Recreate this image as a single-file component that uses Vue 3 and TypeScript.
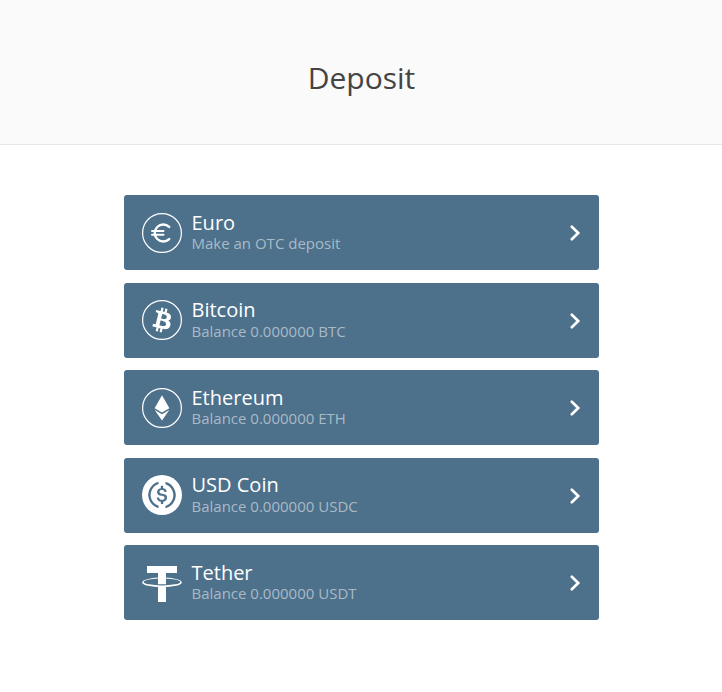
<script setup lang="ts">
interface Currency {
  id: string
  name: string
  detail: string
}

const currencies: Currency[] = [
  { id: 'eur', name: 'Euro', detail: 'Make an OTC deposit' },
  { id: 'btc', name: 'Bitcoin', detail: 'Balance 0.000000 BTC' },
  { id: 'eth', name: 'Ethereum', detail: 'Balance 0.000000 ETH' },
  { id: 'usdc', name: 'USD Coin', detail: 'Balance 0.000000 USDC' },
  { id: 'usdt', name: 'Tether', detail: 'Balance 0.000000 USDT' },
]
</script>

<template>
  <div class="page">
    <header class="header">
      <h1>Deposit</h1>
    </header>
    <main class="list">
      <button v-for="c in currencies" :key="c.id" class="card" type="button">
        <svg class="icon" viewBox="0 0 40 40" aria-hidden="true">
          <circle v-if="['eur', 'btc', 'eth'].includes(c.id)" class="line" cx="20" cy="20" r="19.4" />
          <g v-if="c.id === 'eur'" class="line euro">
            <path d="M27.2 13.9A8.5 8.5 0 1 0 27.2 26.1" />
            <path class="bar" d="M10 18.1H21.5M10 21.7H21.5" />
          </g>
          <path
            v-else-if="c.id === 'btc'"
            transform="scale(1.25)"
            d="M23.189 14.02c.314-2.096-1.283-3.223-3.465-3.975l.708-2.84-1.728-.43-.69 2.765c-.454-.114-.92-.22-1.385-.326l.695-2.783L15.596 6l-.708 2.839c-.376-.086-.746-.17-1.104-.26l.002-.009-2.384-.595-.46 1.846s1.283.294 1.256.312c.7.175.826.638.805 1.006l-.806 3.235c.048.012.11.03.18.057l-.183-.045-1.13 4.532c-.086.212-.303.531-.793.41.018.025-1.256-.313-1.256-.313l-.858 1.978 2.25.561c.418.105.828.215 1.231.318l-.715 2.872 1.727.43.708-2.84c.472.127.93.245 1.378.357l-.706 2.828 1.728.43.715-2.866c2.948.558 5.164.333 6.097-2.333.752-2.146-.037-3.385-1.588-4.192 1.13-.26 1.98-1.003 2.207-2.538zm-3.95 5.538c-.533 2.147-4.148.986-5.32.695l.95-3.805c1.172.293 4.929.872 4.37 3.11zm.535-5.569c-.487 1.953-3.495.96-4.47.717l.86-3.45c.975.243 4.118.696 3.61 2.733z"
          />
          <path v-else-if="c.id === 'eth'" d="M20 7.3L27.4 20.2L20 24.6L12.6 20.2ZM12.7 22L20 26.3L27.3 22L20 32.5Z" />
          <g v-else-if="c.id === 'usdc'">
            <circle cx="20" cy="20" r="20" />
            <g class="cutout" transform="scale(1.25)">
              <path d="M20.022 18.124c0-2.124-1.28-2.852-3.84-3.156-1.828-.243-2.193-.728-2.193-1.578 0-.85.61-1.396 1.828-1.396 1.097 0 1.707.364 2.011 1.275a.458.458 0 00.427.303h.975a.416.416 0 00.427-.425v-.06a3.04 3.04 0 00-2.743-2.489V9.142c0-.243-.183-.425-.487-.486h-.915c-.243 0-.426.182-.487.486v1.396c-1.829.242-2.986 1.456-2.986 2.974 0 2.002 1.218 2.791 3.778 3.095 1.707.303 2.255.668 2.255 1.639 0 .97-.853 1.638-2.011 1.638-1.585 0-2.133-.667-2.316-1.578-.06-.242-.244-.364-.427-.364h-1.036a.416.416 0 00-.426.425v.06c.243 1.518 1.219 2.61 3.23 2.914v1.457c0 .242.183.425.487.485h.915c.243 0 .426-.182.487-.485V21.34c1.829-.303 3.047-1.578 3.047-3.217z" />
              <path d="M12.892 24.497c-4.754-1.7-7.192-6.98-5.424-11.653.914-2.55 2.925-4.491 5.424-5.402.244-.121.365-.303.365-.607v-.85c0-.242-.121-.424-.365-.485-.061 0-.183 0-.244.06a10.895 10.895 0 00-7.13 13.717c1.096 3.4 3.717 6.01 7.13 7.102.244.121.488 0 .548-.243.061-.06.061-.122.061-.243v-.85c0-.182-.182-.424-.365-.546zm6.46-18.936c-.244-.122-.488 0-.548.242-.061.061-.061.122-.061.243v.85c0 .243.182.485.365.607 4.754 1.7 7.192 6.98 5.424 11.653-.914 2.55-2.925 4.491-5.424 5.402-.244.121-.365.303-.365.607v.85c0 .242.121.424.365.485.061 0 .183 0 .244-.06a10.895 10.895 0 007.13-13.717c-1.096-3.46-3.778-6.07-7.13-7.162z" />
            </g>
          </g>
          <g v-else>
            <path d="M5 3H35V10.1H24V21.2H16V10.1H5Z" />
            <path d="M16 24H24V39H16Z" />
            <path
              fill-rule="evenodd"
              d="M0.2 19.4A19.8 4.8 0 1 0 39.8 19.4A19.8 4.8 0 1 0 0.2 19.4ZM1.7 18.9A18.3 3.5 0 1 1 38.3 18.9A18.3 3.5 0 1 1 1.7 18.9Z"
            />
          </g>
        </svg>
        <span class="text">
          <span class="name">{{ c.name }}</span>
          <span class="detail">{{ c.detail }}</span>
        </span>
        <svg class="chevron" viewBox="0 0 12 18" aria-hidden="true">
          <path d="M2.8 2.8L9.2 9L2.8 15.2" />
        </svg>
      </button>
    </main>
  </div>
</template>

<style>
body {
  margin: 0;
  background: #fff;
}
</style>

<style scoped>
.page {
  min-height: 692px;
  font-family: 'Open Sans', 'Noto Sans', sans-serif;
}
.header {
  box-sizing: border-box;
  height: 145px;
  padding: 57px 0 0 1px;
  background: #fafafa;
  border-bottom: 1px solid #e7e7e7;
  text-align: center;
}
h1 {
  margin: 0;
  font-size: 30px;
  line-height: 41px;
  font-weight: 400;
  color: #444;
}
.list {
  width: 475px;
  margin: 50px auto 0;
  display: flex;
  flex-direction: column;
  gap: 12.5px;
}
.card {
  box-sizing: border-box;
  width: 100%;
  height: 75px;
  padding: 0 18px;
  display: flex;
  align-items: center;
  border: 0;
  border-radius: 3px;
  background: #4d708b;
  color: #fff;
  font-family: inherit;
  text-align: left;
}
.icon {
  width: 40px;
  height: 40px;
  flex: none;
  overflow: visible;
  fill: #fff;
}
.line {
  fill: none;
  stroke: #fff;
  stroke-width: 1.2;
}
.euro {
  stroke-width: 2.4;
  stroke-linecap: round;
}
.bar {
  stroke-width: 2;
}
.cutout {
  fill: #4d708b;
}
.text {
  flex: 1;
  margin: 0.65px 0 0 10px;
  display: flex;
  flex-direction: column;
}
.name {
  font-size: 20px;
  line-height: 21px;
  font-weight: 500;
}
.detail {
  font-size: 15px;
  line-height: 21px;
  padding-top: 0.6px;
  color: #a9bac7;
}
.chevron {
  width: 12px;
  height: 18px;
  margin-top: 1px;
  fill: none;
  stroke: #fff;
  stroke-width: 2.7;
  stroke-linecap: round;
}
</style>
